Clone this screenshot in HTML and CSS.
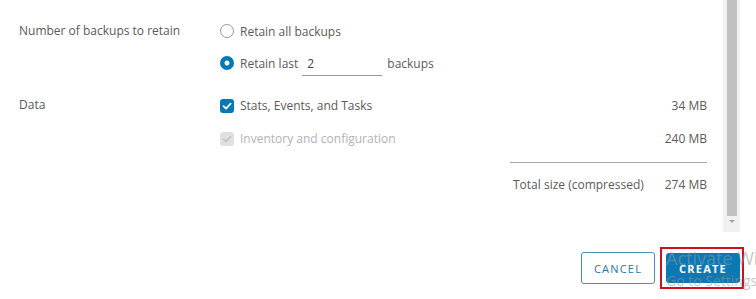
FILE: index.html
```html
<!DOCTYPE html>
<html lang="en">
<head>
    <meta charset="UTF-8">
    <title>Create Backup Schedule</title>
    <link rel="stylesheet" href="styles.css">
</head>
<body>
    <div class="dialog">
        <div class="scroll-area">
            <div class="content">
                <!-- Retention -->
                <div class="field">
                    <div class="field-label">Number of backups to retain</div>
                    <div class="field-body">
                        <div class="option">
                            <span class="radio"></span>
                            <span>Retain all backups</span>
                        </div>
                        <div class="option">
                            <span class="radio checked"></span>
                            <span>Retain last</span>
                            <span class="text-input">2</span>
                            <span>backups</span>
                        </div>
                    </div>
                </div>

                <!-- Data -->
                <div class="field data">
                    <div class="field-label">Data</div>
                    <div class="field-body">
                        <div class="option">
                            <span class="checkbox checked">
                                <svg viewBox="0 0 14 14" width="14" height="14"><path d="M3.5 7.2 L6 9.6 L10.6 4.6" fill="none" stroke="#fff" stroke-width="1.8" stroke-linecap="round" stroke-linejoin="round"/></svg>
                            </span>
                            <span class="option-text">Stats, Events, and Tasks</span>
                            <span class="size">34 MB</span>
                        </div>
                        <div class="option">
                            <span class="checkbox">
                                <svg viewBox="0 0 14 14" width="14" height="14"><path d="M3.5 7.2 L6 9.6 L10.6 4.6" fill="none" stroke="#c4c4c4" stroke-width="1.8" stroke-linecap="round" stroke-linejoin="round"/></svg>
                            </span>
                            <span class="option-text disabled">Inventory and configuration</span>
                            <span class="size">240 MB</span>
                        </div>
                    </div>
                </div>

                <div class="total">
                    <span>Total size (compressed)</span>
                    <span>274 MB</span>
                </div>
            </div>

            <div class="scrollbar">
                <div class="thumb"></div>
                <div class="arrow"></div>
            </div>
        </div>

        <div class="footer">
            <button class="btn btn-outline">CANCEL</button>
            <div class="highlight">
                <button class="btn btn-primary">CREATE</button>
            </div>
        </div>

        <div class="watermark">
            <div class="wm-title">Activate Windows</div>
            <div class="wm-sub">Go to Settings to activate Windows.</div>
        </div>
    </div>
</body>
</html>
```

FILE: styles.css
```css
body {
    margin: 0;
    background: #fff;
    font-family: 'Open Sans', sans-serif;
    font-size: 12px;
    color: #5a5a5a;
}
.dialog {
    position: relative;
    width: 756px;
    height: 299px;
    overflow: hidden;
}
.scroll-area {
    display: flex;
    height: 232px;
}
.content {
    width: 688px;
    padding: 15px 16px 0 19px;
}
.field {
    display: flex;
}
.field-label {
    width: 201px;
    flex-shrink: 0;
    height: 32px;
    line-height: 32px;
}
.field-body {
    flex: 1;
}
.option {
    display: flex;
    align-items: center;
    height: 32px;
}
.data {
    margin-top: 10px;
}
.data .option {
    height: 33px;
}
.option-text {
    flex: 1;
}
.size {
    text-align: right;
}
.disabled {
    color: #b3b3b3;
}
.radio {
    width: 12px;
    height: 12px;
    border: 1px solid #9a9a9a;
    border-radius: 50%;
    margin-right: 6px;
    box-sizing: content-box;
}
.radio.checked {
    width: 14px;
    height: 14px;
    border: none;
    background: radial-gradient(circle, #fff 0 2.2px, #0079b8 2.8px);
}
.text-input {
    width: 75px;
    margin-left: 4px;
    margin-right: 5px;
    padding-left: 5px;
    height: 22px;
    line-height: 22px;
    border-bottom: 1px solid #9a9a9a;
    color: #444;
    margin-top: 2px;
}
.checkbox {
    width: 14px;
    height: 14px;
    border-radius: 3px;
    background: #e0e0e0;
    margin-right: 6px;
    display: flex;
}
.checkbox.checked {
    background: #0079b8;
}
.total {
    margin-left: 491px;
    margin-top: 7px;
    border-top: 1px solid #a8a8a8;
    display: flex;
    justify-content: space-between;
    padding: 0 0 0 3px;
    height: 44px;
    line-height: 44px;
}
.scrollbar {
    width: 17px;
    background: #f1f1f1;
    display: flex;
    flex-direction: column;
    align-items: center;
}
.thumb {
    width: 10px;
    flex: 1;
    background: #c1c1c1;
    margin-bottom: 4px;
}
.arrow {
    width: 0;
    height: 0;
    border-left: 3px solid transparent;
    border-right: 3px solid transparent;
    border-top: 3px solid #a3a3a3;
    margin-bottom: 9px;
}
.footer {
    display: flex;
    justify-content: flex-end;
    align-items: center;
    padding: 15px 12px 0 0;
    gap: 5px;
}
.btn {
    font-family: 'Open Sans', sans-serif;
    font-size: 11px;
    letter-spacing: 1.2px;
    height: 32px;
    border-radius: 3px;
    padding: 0 11px;
    cursor: pointer;
}
.btn-outline {
    width: 74px;
    background: #fff;
    color: #2b78a8;
    border: 1px solid #4a8db8;
}
.btn-primary {
    width: 74px;
    height: 30px;
    background: #0a79b6;
    color: #fff;
    border: none;
    font-weight: 700;
}
.highlight {
    border: 2px solid #d0101e;
    padding: 4px 2px 4px 4px;
    display: flex;
}
.watermark {
    position: absolute;
    left: 666px;
    top: 247px;
    color: rgba(150, 150, 150, 0.55);
    white-space: nowrap;
    font-family: 'Open Sans', sans-serif;
    pointer-events: none;
}
.wm-title {
    font-size: 18px;
    line-height: 22px;
}
.wm-sub {
    font-size: 14px;
    line-height: 24px;
}
```
